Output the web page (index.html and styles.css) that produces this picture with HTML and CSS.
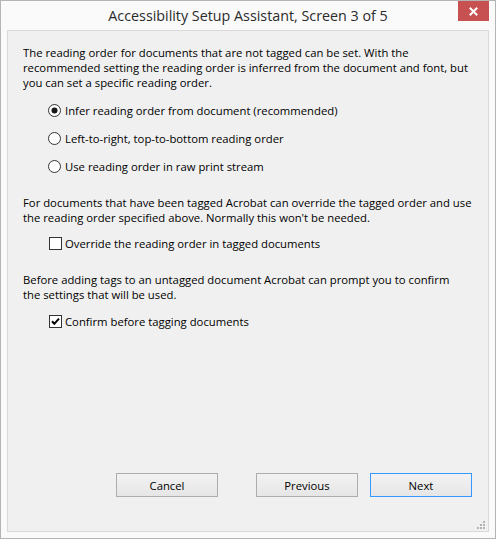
FILE: index.html
```html
<!DOCTYPE html>
<html lang="en">
<head>
<meta charset="utf-8">
<title>Accessibility Setup Assistant</title>
<link rel="stylesheet" href="styles.css">
</head>
<body>
<div class="window">
  <div class="titlebar">
    <div class="spacer"></div>
    <div class="title">Accessibility Setup Assistant, Screen 3 of 5</div>
    <div class="close" aria-label="Close">
      <svg width="31" height="20" viewBox="0 0 31 20"><path d="M12.5 7.5 L18.5 13.5 M18.5 7.5 L12.5 13.5" stroke="#fff" stroke-width="2" fill="none" stroke-linecap="square"/></svg>
    </div>
  </div>
  <div class="panel">
    <div class="content">
      <p class="para">The reading order for documents that are not tagged can be set. With the<br>recommended setting the reading order is inferred from the document and font, but<br>you can set a specific reading order.</p>
      <div class="options">
        <div class="row">
          <svg class="radio" width="13" height="13" viewBox="0 0 13 13"><circle cx="6.5" cy="6.5" r="6" fill="#fff" stroke="#333"/><circle cx="6.5" cy="6.5" r="3" fill="#1a1a1a"/></svg>
          <span>Infer reading order from document (recommended)</span>
        </div>
        <div class="row">
          <svg class="radio" width="13" height="13" viewBox="0 0 13 13"><circle cx="6.5" cy="6.5" r="6" fill="#fff" stroke="#333"/></svg>
          <span>Left-to-right, top-to-bottom reading order</span>
        </div>
        <div class="row">
          <svg class="radio" width="13" height="13" viewBox="0 0 13 13"><circle cx="6.5" cy="6.5" r="6" fill="#fff" stroke="#333"/></svg>
          <span>Use reading order in raw print stream</span>
        </div>
      </div>
      <p class="para para2">For documents that have been tagged Acrobat can override the tagged order and use<br>the reading order specified above. Normally this won't be needed.</p>
      <div class="row checkrow">
        <svg class="check" width="13" height="13" viewBox="0 0 13 13"><rect x="0.5" y="0.5" width="12" height="12" fill="#fff" stroke="#333"/></svg>
        <span>Override the reading order in tagged documents</span>
      </div>
      <p class="para para3">Before adding tags to an untagged document Acrobat can prompt you to confirm<br>the settings that will be used.</p>
      <div class="row checkrow checkrow2">
        <svg class="check" width="13" height="13" viewBox="0 0 13 13"><rect x="0.5" y="0.5" width="12" height="12" fill="#fff" stroke="#333"/><path d="M3 6.3 L5.3 8.8 L10 3.6" stroke="#000" stroke-width="2" fill="none"/></svg>
        <span>Confirm before tagging documents</span>
      </div>
    </div>
    <div class="buttons">
      <div class="btn">Cancel</div>
      <div class="btn btn-prev">Previous</div>
      <div class="btn btn-default">Next</div>
    </div>
    <div class="grip" aria-hidden="true">
      <svg width="9" height="9" viewBox="0 0 9 9" fill="#b3b3b3">
        <rect x="6" y="0" width="2" height="2"/>
        <rect x="3" y="3" width="2" height="2"/><rect x="6" y="3" width="2" height="2"/>
        <rect x="0" y="6" width="2" height="2"/><rect x="3" y="6" width="2" height="2"/><rect x="6" y="6" width="2" height="2"/>
      </svg>
    </div>
  </div>
</div>
</body>
</html>
```
FILE: styles.css
```css
html, body {
  margin: 0;
  padding: 0;
  background: #fafafa;
}

.window {
  box-sizing: border-box;
  width: 496px;
  height: 539px;
  border: 1px solid #b4b4b4;
  background: #fafafa;
  padding: 0 6px 6px;
  display: flex;
  flex-direction: column;
  font-family: "Open Sans", "Noto Sans", sans-serif;
  color: #000;
}

.titlebar {
  height: 29px;
  display: grid;
  grid-template-columns: 1fr auto 1fr;
  align-items: start;
  flex: none;
}

.title {
  padding-top: 5px;
  font-size: 14.3px;
  line-height: 19px;
  color: #2b2b2b;
  white-space: nowrap;
}

.close {
  justify-self: end;
  width: 31px;
  height: 20px;
  background: #c75050;
}

.close svg {
  display: block;
}

.panel {
  position: relative;
  flex: 1;
  border: 1px solid #d9d9d9;
  background: #f0f0f0;
  display: flex;
  flex-direction: column;
}

.content {
  padding: 14px 10px 0 15px;
  font-size: 11.3px;
  line-height: 15px;
}

.para {
  margin: 0;
  white-space: nowrap;
}

.options {
  margin: 13px 0 0 25px;
  display: flex;
  flex-direction: column;
  gap: 13px;
}

.row {
  display: flex;
  align-items: center;
  height: 15px;
  gap: 4px;
  white-space: nowrap;
}

.radio, .check {
  flex: none;
  display: block;
}

.para2 {
  margin-top: 21px;
}

.checkrow {
  margin: 11px 0 0 26px;
  gap: 3px;
}

.para3 {
  margin-top: 21px;
}

.checkrow2 {
  margin-top: 12px;
}

.buttons {
  margin-top: auto;
  display: flex;
  padding: 0 16px 34px 108px;
  font-size: 11.3px;
}

.btn {
  box-sizing: border-box;
  width: 102px;
  height: 24px;
  border: 1px solid #adadad;
  background: linear-gradient(#f2f2f2, #e6e6e6);
  display: flex;
  align-items: center;
  justify-content: center;
  line-height: 15px;
  color: #000;
}

.btn-prev {
  margin-left: 38px;
}

.btn-default {
  margin-left: 12px;
  border-color: #3399ff;
}

.grip {
  position: absolute;
  right: 2px;
  bottom: 1px;
  line-height: 0;
}
```
